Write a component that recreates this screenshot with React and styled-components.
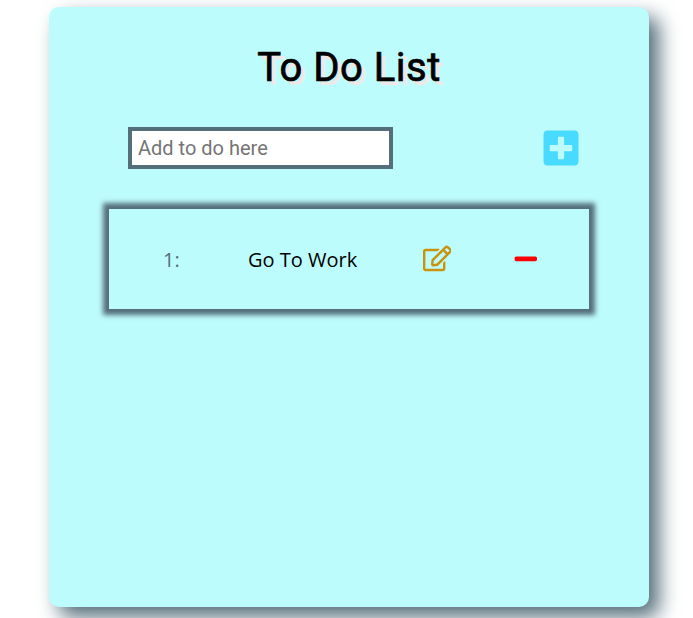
import React from "react";
import styled, { createGlobalStyle } from "styled-components";
import { FaPlusSquare, FaRegEdit, FaMinus } from "react-icons/fa";

const GlobalStyle = createGlobalStyle`
  * { box-sizing: border-box; }
  html { overflow: hidden; }
  body { margin: 0; height: 618px; overflow: hidden; background: #fff; }
`;

const Card = styled.main`
  width: 600px;
  height: 600px;
  margin: 7px 0 0 49px;
  border-radius: 10px;
  background: #bdfcfc;
  box-shadow: 10px 10px 20px #546e7a;
  display: flex;
  flex-direction: column;
  align-items: center;
`;

const Title = styled.h1`
  margin: 37px 0 0;
  height: 48px;
  font: 400 40px/48px Roboto, sans-serif;
  letter-spacing: 0.5px;
  color: #000;
  -webkit-text-stroke: 0.7px #000;
  text-shadow: 4px 4px #f0e8e6;
`;

const AddRow = styled.form`
  width: 453px;
  margin: 35px 0 0 11px;
  height: 42px;
  display: flex;
  align-items: center;
  justify-content: space-between;
`;

const TodoInput = styled.input`
  width: 265px;
  height: 42px;
  padding: 1px 6px;
  border: 4px solid #546e7a;
  background: #fff;
  font: 400 20px Roboto, sans-serif;
  outline: none;
  &::placeholder { color: #757575; }
`;

const IconButton = styled.button`
  display: flex;
  padding: 0;
  border: 0;
  background: none;
  color: ${(p) => p.$color};
  font-size: ${(p) => p.$size}px;
`;

const TodoItem = styled.section`
  width: 480px;
  height: 100px;
  margin-top: 40px;
  box-shadow: 0 0 5px 6px #546e7a;
  display: grid;
  grid-template-columns: 139px 174.5px 90px 1fr;
  align-items: center;
  font: 400 20px "Open Sans", sans-serif;
`;

const Index = styled.span`
  padding-left: 54px;
  color: #546e7a;
`;

const Label = styled.span`
  color: #000;
`;

const ItemButton = styled(IconButton)`
  margin-bottom: 1px;
`;

export default function App() {
  return (
    <>
      <GlobalStyle />
      <Card>
        <Title>To Do List</Title>
        <AddRow>
          <TodoInput placeholder="Add to do here" />
          <IconButton type="button" aria-label="Add" $color="#48daff" $size={40}>
            <FaPlusSquare />
          </IconButton>
        </AddRow>
        <TodoItem>
          <Index>1:</Index>
          <Label>Go To Work</Label>
          <ItemButton aria-label="Edit" $color="#c9930e" $size={28.8}>
            <FaRegEdit />
          </ItemButton>
          <ItemButton aria-label="Remove" $color="#f00" $size={25.6}>
            <FaMinus />
          </ItemButton>
        </TodoItem>
      </Card>
    </>
  );
}
